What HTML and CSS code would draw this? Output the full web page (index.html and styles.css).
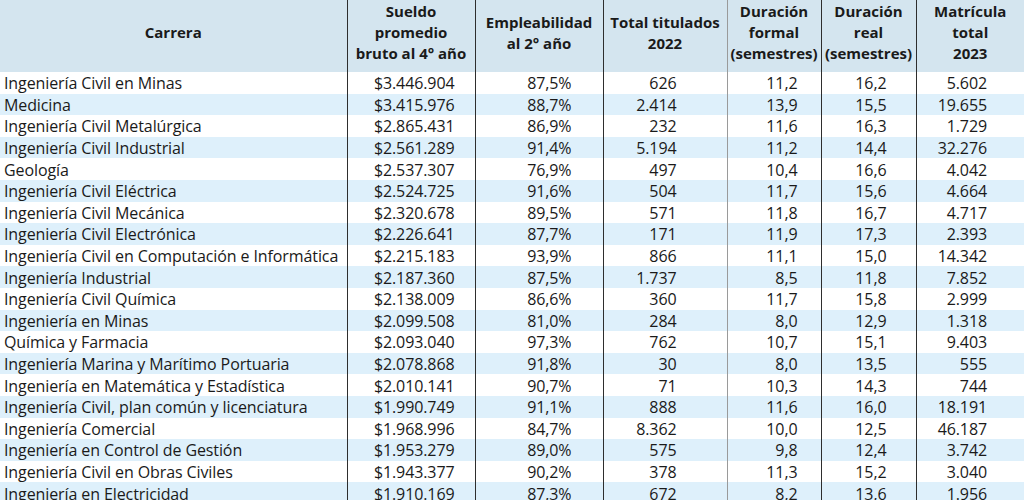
FILE: index.html
```html
<!DOCTYPE html>
<html lang="es">
<head>
<meta charset="utf-8">
<link rel="stylesheet" href="styles.css">
</head>
<body>
<table class="tbl">
<colgroup>
<col class="c1"><col class="c2"><col class="c3"><col class="c4"><col class="c5"><col class="c6"><col class="c7">
</colgroup>
<thead>
<tr>
<th>Carrera</th>
<th class="bd">Sueldo<br>promedio<br>bruto al 4° año</th>
<th class="bd">Empleabilidad<br>al 2° año</th>
<th class="bd">Total titulados<br>2022</th>
<th class="bg">Duración<br>formal<br>(semestres)</th>
<th class="bd">Duración<br>real<br>(semestres)</th>
<th class="bd">Matrícula<br>total<br>2023</th>
</tr>
</thead>
<tbody>
<tr><td>Ingeniería Civil en Minas</td><td class="bd n2">$3.446.904</td><td class="bd n3">87,5%</td><td class="bd n4">626</td><td class="bg n5">11,2</td><td class="bd n6">16,2</td><td class="bd n7">5.602</td></tr>
<tr><td>Medicina</td><td class="bd n2">$3.415.976</td><td class="bd n3">88,7%</td><td class="bd n4">2.414</td><td class="bg n5">13,9</td><td class="bd n6">15,5</td><td class="bd n7">19.655</td></tr>
<tr><td>Ingeniería Civil Metalúrgica</td><td class="bd n2">$2.865.431</td><td class="bd n3">86,9%</td><td class="bd n4">232</td><td class="bg n5">11,6</td><td class="bd n6">16,3</td><td class="bd n7">1.729</td></tr>
<tr><td>Ingeniería Civil Industrial</td><td class="bd n2">$2.561.289</td><td class="bd n3">91,4%</td><td class="bd n4">5.194</td><td class="bg n5">11,2</td><td class="bd n6">14,4</td><td class="bd n7">32.276</td></tr>
<tr><td>Geología</td><td class="bd n2">$2.537.307</td><td class="bd n3">76,9%</td><td class="bd n4">497</td><td class="bg n5">10,4</td><td class="bd n6">16,6</td><td class="bd n7">4.042</td></tr>
<tr><td>Ingeniería Civil Eléctrica</td><td class="bd n2">$2.524.725</td><td class="bd n3">91,6%</td><td class="bd n4">504</td><td class="bg n5">11,7</td><td class="bd n6">15,6</td><td class="bd n7">4.664</td></tr>
<tr><td>Ingeniería Civil Mecánica</td><td class="bd n2">$2.320.678</td><td class="bd n3">89,5%</td><td class="bd n4">571</td><td class="bg n5">11,8</td><td class="bd n6">16,7</td><td class="bd n7">4.717</td></tr>
<tr><td>Ingeniería Civil Electrónica</td><td class="bd n2">$2.226.641</td><td class="bd n3">87,7%</td><td class="bd n4">171</td><td class="bg n5">11,9</td><td class="bd n6">17,3</td><td class="bd n7">2.393</td></tr>
<tr><td>Ingeniería Civil en Computación e Informática</td><td class="bd n2">$2.215.183</td><td class="bd n3">93,9%</td><td class="bd n4">866</td><td class="bg n5">11,1</td><td class="bd n6">15,0</td><td class="bd n7">14.342</td></tr>
<tr><td>Ingeniería Industrial</td><td class="bd n2">$2.187.360</td><td class="bd n3">87,5%</td><td class="bd n4">1.737</td><td class="bg n5">8,5</td><td class="bd n6">11,8</td><td class="bd n7">7.852</td></tr>
<tr><td>Ingeniería Civil Química</td><td class="bd n2">$2.138.009</td><td class="bd n3">86,6%</td><td class="bd n4">360</td><td class="bg n5">11,7</td><td class="bd n6">15,8</td><td class="bd n7">2.999</td></tr>
<tr><td>Ingeniería en Minas</td><td class="bd n2">$2.099.508</td><td class="bd n3">81,0%</td><td class="bd n4">284</td><td class="bg n5">8,0</td><td class="bd n6">12,9</td><td class="bd n7">1.318</td></tr>
<tr><td>Química y Farmacia</td><td class="bd n2">$2.093.040</td><td class="bd n3">97,3%</td><td class="bd n4">762</td><td class="bg n5">10,7</td><td class="bd n6">15,1</td><td class="bd n7">9.403</td></tr>
<tr><td>Ingeniería Marina y Marítimo Portuaria</td><td class="bd n2">$2.078.868</td><td class="bd n3">91,8%</td><td class="bd n4">30</td><td class="bg n5">8,0</td><td class="bd n6">13,5</td><td class="bd n7">555</td></tr>
<tr><td>Ingeniería en Matemática y Estadística</td><td class="bd n2">$2.010.141</td><td class="bd n3">90,7%</td><td class="bd n4">71</td><td class="bg n5">10,3</td><td class="bd n6">14,3</td><td class="bd n7">744</td></tr>
<tr><td>Ingeniería Civil, plan común y licenciatura</td><td class="bd n2">$1.990.749</td><td class="bd n3">91,1%</td><td class="bd n4">888</td><td class="bg n5">11,6</td><td class="bd n6">16,0</td><td class="bd n7">18.191</td></tr>
<tr><td>Ingeniería Comercial</td><td class="bd n2">$1.968.996</td><td class="bd n3">84,7%</td><td class="bd n4">8.362</td><td class="bg n5">10,0</td><td class="bd n6">12,5</td><td class="bd n7">46.187</td></tr>
<tr><td>Ingeniería en Control de Gestión</td><td class="bd n2">$1.953.279</td><td class="bd n3">89,0%</td><td class="bd n4">575</td><td class="bg n5">9,8</td><td class="bd n6">12,4</td><td class="bd n7">3.742</td></tr>
<tr><td>Ingeniería Civil en Obras Civiles</td><td class="bd n2">$1.943.377</td><td class="bd n3">90,2%</td><td class="bd n4">378</td><td class="bg n5">11,3</td><td class="bd n6">15,2</td><td class="bd n7">3.040</td></tr>
<tr><td>Ingeniería en Electricidad</td><td class="bd n2">$1.910.169</td><td class="bd n3">87,3%</td><td class="bd n4">672</td><td class="bg n5">8,2</td><td class="bd n6">13,6</td><td class="bd n7">1.956</td></tr>
</tbody>
</table>
</body>
</html>
```
FILE: styles.css
```css
html, body {
  margin: 0;
  padding: 0;
  background: #ffffff;
}
body {
  font-family: "Open Sans", "Noto Sans", sans-serif;
  color: #1a1a1a;
}
.tbl {
  width: 1024px;
  border-collapse: collapse;
  table-layout: fixed;
}
.c1 { width: 347px; }
.c2 { width: 128px; }
.c3 { width: 128px; }
.c4 { width: 124px; }
.c5 { width: 94px; }
.c6 { width: 95px; }
.c7 { width: 108px; }
thead tr {
  background: #d4e5ef;
  height: 72px;
}
th {
  font-size: 15px;
  font-weight: 700;
  line-height: 21px;
  text-align: center;
  vertical-align: middle;
  padding: 0 0 7px;
  letter-spacing: 0;
}
tbody tr {
  height: 21.6px;
}
tbody tr:nth-child(even) {
  background: #def0fb;
}
td {
  font-size: 16px;
  line-height: 20px;
  padding: 1px 0 0;
  white-space: nowrap;
  letter-spacing: -0.1px;
}
td:first-child {
  padding-left: 4px;
}
.bd { border-left: 1px solid #2e2e2e; }
.bg { border-left: 1px solid #9a9a9a; }
.n2 { text-align: right; padding-right: 20px; }
.n3 { text-align: right; padding-right: 31px; }
.n4 { text-align: right; padding-right: 50px; }
.n5 { text-align: right; padding-right: 23px; }
.n6 { text-align: right; padding-right: 29px; }
.n7 { text-align: right; padding-right: 37px; }
```
